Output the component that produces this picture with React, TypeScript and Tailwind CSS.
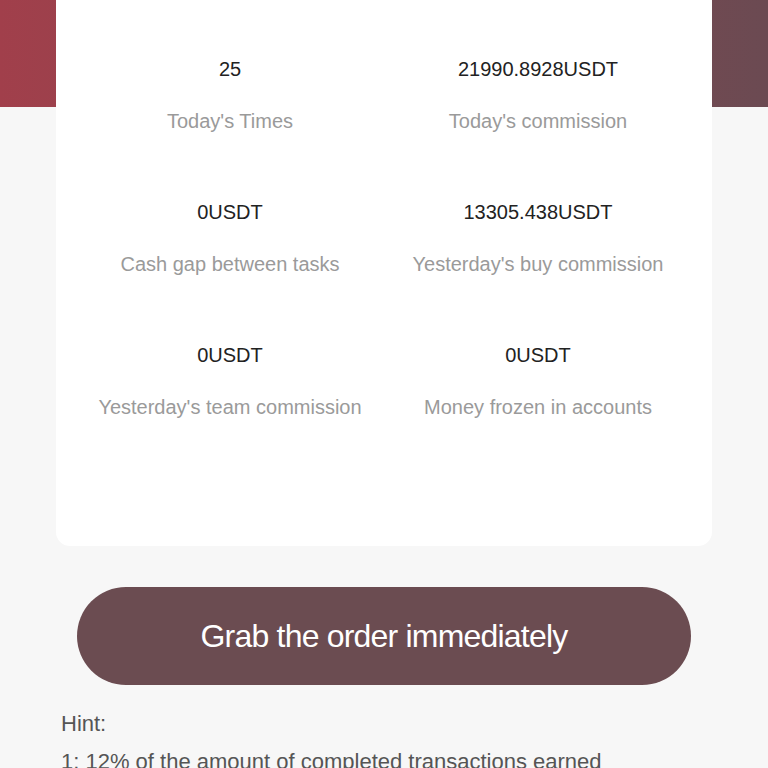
import React from 'react'

const stats = [
    { value: '25', label: "Today's Times" },
    { value: '21990.8928USDT', label: "Today's commission" },
    { value: '0USDT', label: 'Cash gap between tasks' },
    { value: '13305.438USDT', label: "Yesterday's buy commission" },
    { value: '0USDT', label: "Yesterday's team commission" },
    { value: '0USDT', label: 'Money frozen in accounts' },
]

export default function App() {
    return (
        <div className="min-h-[768px] h-[768px] overflow-hidden bg-[#f7f7f7] font-['Liberation_Sans',sans-serif]">
            {/* header band behind card */}
            <div className="h-[107px] bg-gradient-to-r from-[#a13f4b] to-[#6b4a52]" />

            <div className="mx-[56px] -mt-[107px] bg-white rounded-b-[14px] px-[20px] pt-[57px] pb-[127px]">
                <div className="grid grid-cols-2 gap-y-[67px]">
                    {stats.map((s, i) => (
                        <div key={i} className="flex flex-col items-center">
                            <div className="text-[20px] leading-[24px] text-[#222]">{s.value}</div>
                            <div className="mt-[28px] text-[20px] leading-[24px] text-[#9a9a9a]">{s.label}</div>
                        </div>
                    ))}
                </div>
            </div>

            <div className="mx-[77px] mt-[41px]">
                <button className="w-full h-[98px] rounded-full bg-[#6b4c51] text-white text-[32px] tracking-tight">
                    Grab the order immediately
                </button>
            </div>

            <div className="px-[61px] mt-[26px] text-[#555]">
                <div className="text-[22px] leading-[26px]">Hint:</div>
                <div className="mt-[12px] text-[22px] leading-[26px]">1: 12% of the amount of completed transactions earned</div>
            </div>
        </div>
    )
}
